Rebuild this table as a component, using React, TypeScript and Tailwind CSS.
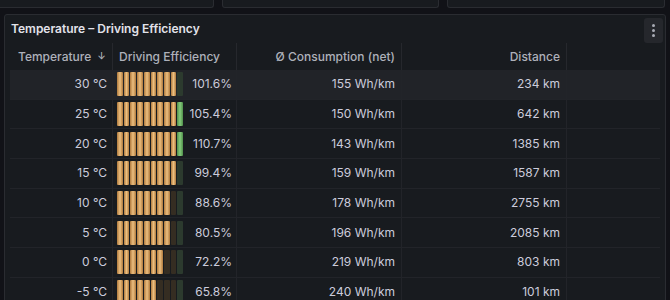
import React from 'react';

const rows = [
  { temp: '30 °C', eff: '101.6%', lit: 9, cons: '155 Wh/km', dist: '234 km', hover: true },
  { temp: '25 °C', eff: '105.4%', lit: 10, cons: '150 Wh/km', dist: '642 km' },
  { temp: '20 °C', eff: '110.7%', lit: 10, cons: '143 Wh/km', dist: '1385 km' },
  { temp: '15 °C', eff: '99.4%', lit: 9, cons: '159 Wh/km', dist: '1587 km' },
  { temp: '10 °C', eff: '88.6%', lit: 8, cons: '178 Wh/km', dist: '2755 km' },
  { temp: '5 °C', eff: '80.5%', lit: 8, cons: '196 Wh/km', dist: '2085 km' },
  { temp: '0 °C', eff: '72.2%', lit: 7, cons: '219 Wh/km', dist: '803 km' },
  { temp: '-5 °C', eff: '65.8%', lit: 6, cons: '240 Wh/km', dist: '101 km' },
];

const Gauge = ({ lit }: { lit: number }) => (
  <div className="flex gap-px w-[66px] h-[24px]">
    {Array.from({ length: 10 }).map((_, i) => {
      const green = i === 9;
      const on = i < lit;
      let cls = 'flex-1 rounded-[1px] ';
      if (on && green) cls += 'bg-gradient-to-r from-[#4f8f4a] via-[#86cc7d] to-[#4f8f4a]';
      else if (on) cls += 'bg-gradient-to-r from-[#b07a3c] via-[#ecbf80] to-[#b07a3c]';
      else if (green) cls += 'bg-[#2c3a2e]';
      else cls += 'bg-[#352d22]';
      return <div key={i} className={cls} />;
    })}
  </div>
);

export default function App() {
  return (
    <div
      className="w-[670px] h-[300px] bg-[#111217] overflow-hidden text-[#ccccdc]"
      style={{ fontFamily: 'Inter, "Noto Sans", sans-serif' }}
    >
      <div className="flex gap-2 h-[8px] -ml-1 pr-[5px]">
        <div className="flex-1 h-full rounded-b-[3px] border border-t-0 border-[#2a2c31] bg-[#181b1f]" />
        <div className="flex-1 h-full rounded-b-[3px] border border-t-0 border-[#2a2c31] bg-[#181b1f]" />
        <div className="flex-1 h-full rounded-b-[3px] border border-t-0 border-[#2a2c31] bg-[#181b1f]" />
      </div>

      <div className="mt-[6px] ml-1 w-[662px] h-[300px] rounded-[3px] border border-[#2a2c31] bg-[#181b1f]">
        <div className="h-[28px] flex items-center justify-between pl-[6px] pr-[2px]">
          <span className="text-[12px] font-semibold text-[#e2e2ea]">
            Temperature – Driving Efficiency
          </span>
          <button className="w-[19px] h-[25px] mt-[2px] rounded-[3px] bg-[#25272c] flex flex-col items-center justify-center gap-[2px]">
            <span className="w-[3px] h-[3px] rounded-full bg-[#a8abb4]" />
            <span className="w-[3px] h-[3px] rounded-full bg-[#a8abb4]" />
            <span className="w-[3px] h-[3px] rounded-full bg-[#a8abb4]" />
          </button>
        </div>

        <div className="mx-[5px] text-[12px]">
          <div className="flex h-[27px] items-center text-[#aeb1ba] font-medium">
            <div className="w-[103px] h-full flex items-center pl-[8px] border-r border-[#26282d]">
              Temperature <span className="ml-[6px] text-[10px]">↓</span>
            </div>
            <div className="w-[124px] h-full flex items-center pl-[6px] border-r border-[#26282d]">
              Driving Efficiency
            </div>
            <div className="w-[165px] h-full flex items-center justify-end pr-[6px] border-r border-[#26282d]">
              Ø Consumption (net)
            </div>
            <div className="w-[165px] h-full flex items-center justify-end pr-[6px] border-r border-[#26282d]">
              Distance
            </div>
            <div className="flex-1" />
          </div>

          {rows.map((r) => (
            <div
              key={r.temp}
              className={
                'flex h-[29.7px] items-center border-b border-[#222429] ' +
                (r.hover ? 'bg-[#212328]' : '')
              }
            >
              <div className="w-[103px] h-full flex items-center justify-end pr-[5px] border-r border-[#222429]">
                {r.temp}
              </div>
              <div className="w-[124px] h-full flex items-center pl-[4px] pr-[4px] border-r border-[#222429]">
                <Gauge lit={r.lit} />
                <span className="ml-auto">{r.eff}</span>
              </div>
              <div className="w-[165px] h-full flex items-center justify-end pr-[6px] border-r border-[#222429]">
                {r.cons}
              </div>
              <div className="w-[165px] h-full flex items-center justify-end pr-[6px] border-r border-[#222429]">
                {r.dist}
              </div>
              <div className="flex-1" />
            </div>
          ))}
        </div>
      </div>
    </div>
  );
}
